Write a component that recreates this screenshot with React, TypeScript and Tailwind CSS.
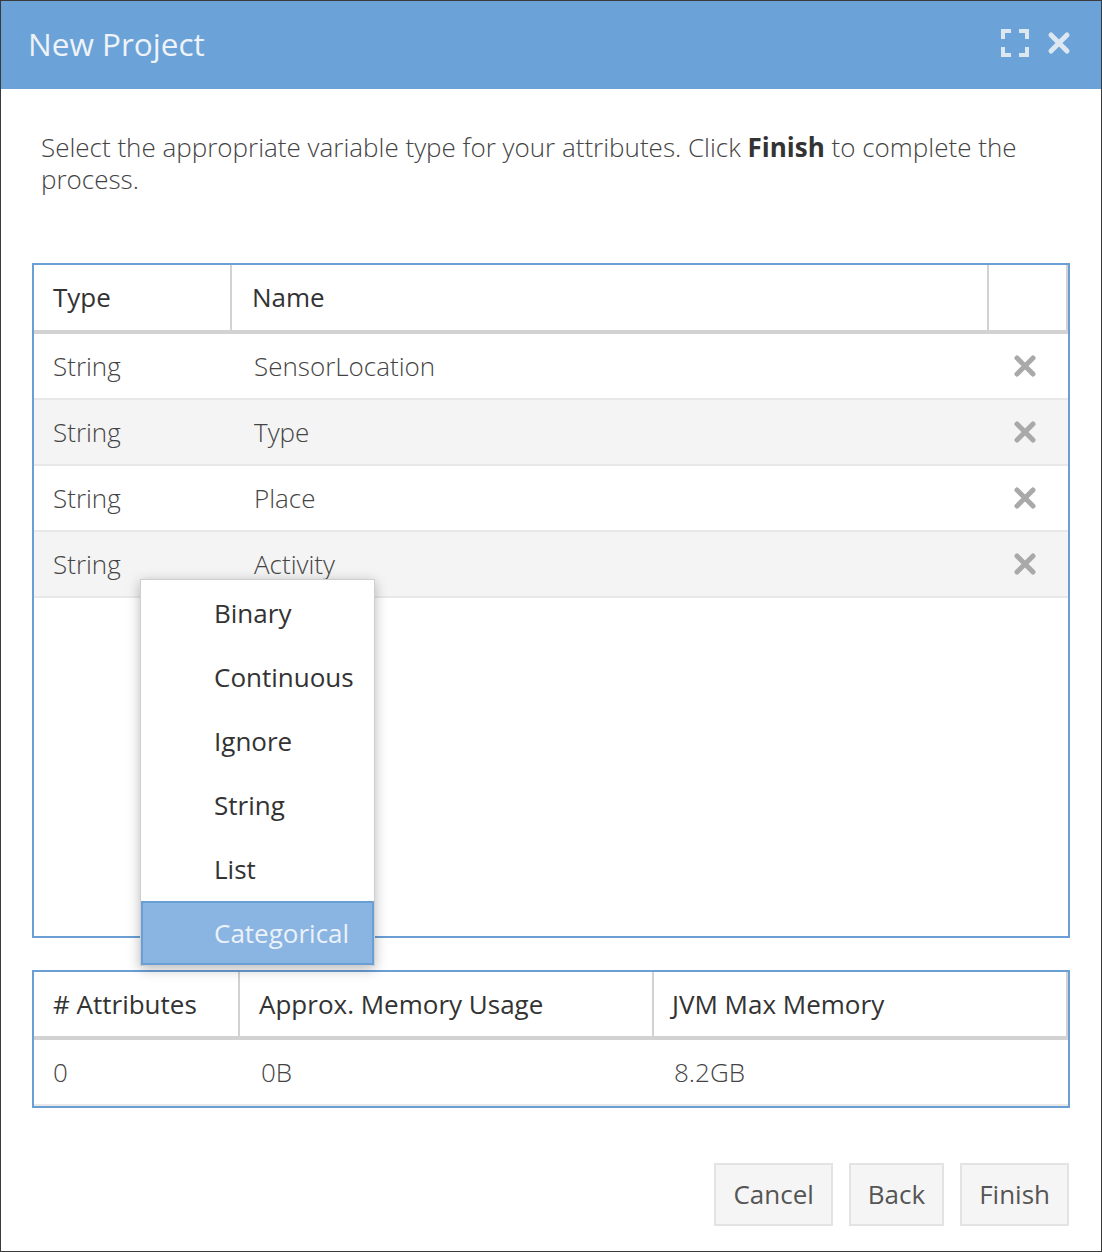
import React from "react";

const rows = [
  { type: "String", name: "SensorLocation" },
  { type: "String", name: "Type" },
  { type: "String", name: "Place" },
  { type: "String", name: "Activity" },
];

const options = ["Binary", "Continuous", "Ignore", "String", "List", "Categorical"];

const TimesIcon = ({ className = "" }: { className?: string }) => (
  <svg viewBox="0 0 24 24" className={className} fill="none" stroke="currentColor" strokeWidth="5" strokeLinecap="round">
    <path d="M4 4 L20 20 M20 4 L4 20" />
  </svg>
);

const ExpandIcon = () => (
  <svg viewBox="0 0 28 28" className="w-[28px] h-[28px]" fill="none" stroke="currentColor" strokeWidth="4">
    <path d="M2 10 V2 H10 M18 2 H26 V10 M26 18 V26 H18 M10 26 H2 V18" />
  </svg>
);

export default function App() {
  return (
    <div
      className="w-[1102px] h-[1252px] bg-white border border-[#3a3a3a] flex flex-col"
      style={{ fontFamily: '"Open Sans", "Noto Sans", sans-serif' }}
    >
      <div className="h-[88px] shrink-0 bg-[#6ba2d7] flex items-center justify-between pl-[27px] pr-[30px]">
        <span className="text-[31.5px] font-normal text-[#eef3f9] -mt-[2px]">New Project</span>
        <div className="flex items-center gap-[18px] text-[#dde7f2] -mt-[4px]">
          <ExpandIcon />
          <TimesIcon className="w-[24px] h-[24px]" />
        </div>
      </div>

      <div className="px-[31px] pt-[42px] flex flex-col flex-1">
        <p className="pl-[9px] text-[26px] leading-[32px] font-light text-[#444]">
          Select the appropriate variable type for your attributes. Click <b className="font-bold text-[#333]">Finish</b> to complete the process.
        </p>

        <div className="relative mt-[68px] h-[675px] border-2 border-[#6a9fd6] flex flex-col">
          <div className="flex h-[69px] border-b-4 border-[#d2d2d2] text-[26px] text-[#333]">
            <div className="w-[198px] pl-[19px] flex items-center border-r-2 border-[#d2d2d2]">Type</div>
            <div className="flex-1 pl-[20px] flex items-center border-r-2 border-[#d2d2d2]">Name</div>
            <div className="w-[79px] border-r-2 border-[#d2d2d2]"></div>
          </div>
          {rows.map((r, i) => (
            <div
              key={i}
              className={`flex h-[66px] border-b-2 border-[#e8e8e8] text-[26px] font-light text-[#444] ${i % 2 === 1 ? "bg-[#f4f4f4]" : "bg-white"}`}
            >
              <div className="w-[200px] pl-[19px] flex items-center">{r.type}</div>
              <div className="flex-1 pl-[20px] flex items-center">{r.name}</div>
              <div className="w-[79px] flex items-center justify-center pr-[8px] text-[#a9a9a9]">
                <TimesIcon className="w-[24px] h-[24px]" />
              </div>
            </div>
          ))}

          <div className="absolute left-[106px] top-[314px] w-[235px] bg-white border border-[#cfcfcf] shadow-[0_3px_12px_rgba(0,0,0,0.28)] flex flex-col">
            {options.map((o, i) =>
              o === "Categorical" ? (
                <div
                  key={o}
                  className="h-[64px] flex items-center pl-[71px] text-[26px] text-[#eaf2fa] bg-[#8ab4e1] border-2 border-[#6a9fd6]"
                >
                  {o}
                </div>
              ) : (
                <div key={o} className={`h-[64px] flex items-center pl-[73px] text-[26px] text-[#333] ${i === 0 ? "mt-[1px]" : ""}`}>
                  {o}
                </div>
              )
            )}
          </div>
        </div>

        <div className="mt-[32px] border-2 border-[#6a9fd6] flex flex-col">
          <div className="flex h-[68px] border-b-4 border-[#d2d2d2] text-[26px] text-[#333]">
            <div className="w-[206px] pl-[19px] flex items-center border-r-2 border-[#d2d2d2]"># Attributes</div>
            <div className="w-[414px] pl-[19px] flex items-center border-r-2 border-[#d2d2d2]">Approx. Memory Usage</div>
            <div className="flex-1 pl-[18px] flex items-center border-r-2 border-[#d2d2d2]">JVM Max Memory</div>
          </div>
          <div className="flex h-[66px] border-b-2 border-[#e8e8e8] text-[26px] font-light text-[#444]">
            <div className="w-[208px] pl-[19px] flex items-center">0</div>
            <div className="w-[414px] pl-[19px] flex items-center">0B</div>
            <div className="flex-1 pl-[18px] flex items-center">8.2GB</div>
          </div>
        </div>

        <div className="mt-[55px] flex justify-end gap-[16px] pr-[1px]">
          <button className="h-[63px] px-[17px] bg-[#f5f5f5] border-2 border-[#e3e3e3] text-[26px] text-[#555]">Cancel</button>
          <button className="h-[63px] px-[17px] bg-[#f5f5f5] border-2 border-[#e3e3e3] text-[26px] text-[#555]">Back</button>
          <button className="h-[63px] px-[17px] bg-[#f5f5f5] border-2 border-[#e3e3e3] text-[26px] text-[#555]">Finish</button>
        </div>
      </div>
    </div>
  );
}
